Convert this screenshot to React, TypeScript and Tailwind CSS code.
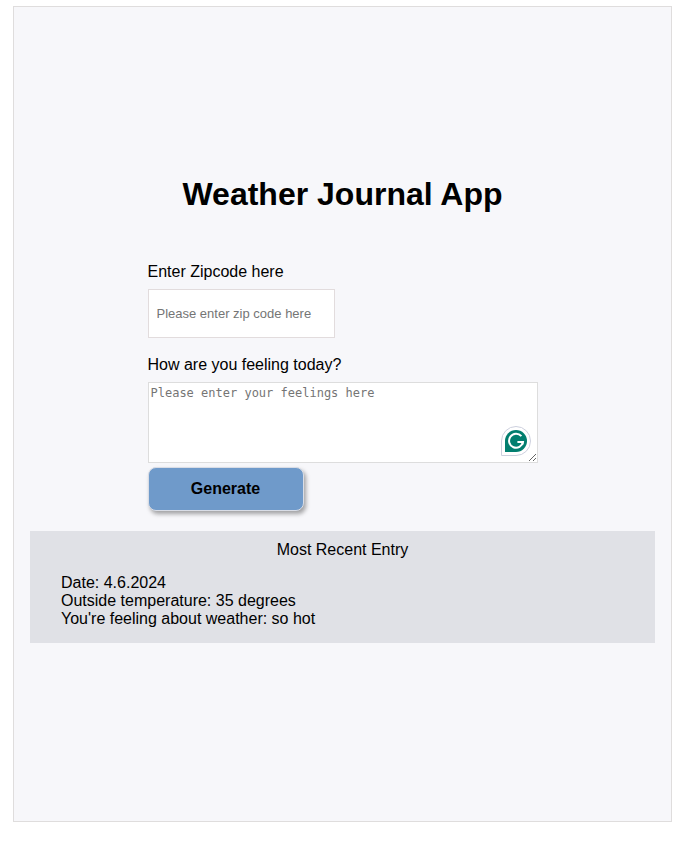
function AssistantBadge() {
  return (
    <svg width="30" height="30" viewBox="0 0 30 30" aria-hidden="true">
      <path d="M15 .5A14.5 14.5 0 0 1 15 29.5H.5V15A14.5 14.5 0 0 1 15 .5Z" fill="#fff" stroke="#cdd0de" />
      <path d="M15 4A11 11 0 0 1 15 26H4V15A11 11 0 0 1 15 4Z" fill="#027e6f" />
      <path d="M20.4 10.2A7 7 0 1 0 22 15.9H16.4" fill="none" stroke="#fff" strokeWidth="2" />
      <path d="M19 15.9H21.6V18.6" fill="none" stroke="#fff" strokeWidth="2" />
    </svg>
  );
}

export default function App() {
  return (
    <div className="min-h-screen bg-white pt-[6px] pr-[15px] pb-[21px] pl-[13px] font-['Liberation_Sans',Arial,sans-serif] text-base leading-[18px] text-black">
      <main className="flex min-h-[calc(100vh-27px)] flex-col items-center justify-center border border-[#dfdddd] bg-[#f7f7fa] px-4">
        <h1 className="text-center text-[32px] leading-10 font-bold">Weather Journal App</h1>

        <form className="mt-[49px] flex w-full max-w-[390px] flex-col items-start" onSubmit={(e) => e.preventDefault()}>
          <label htmlFor="zip">Enter Zipcode here</label>
          <input
            id="zip"
            type="text"
            placeholder="Please enter zip code here"
            className="mt-2 h-[49px] w-[187px] border border-[#e2dcdd] bg-white px-2 text-[13px] outline-none placeholder:text-[#757575]"
          />

          <label htmlFor="feelings" className="mt-[18px]">How are you feeling today?</label>
          <div className="relative mt-2 w-full">
            <textarea
              id="feelings"
              placeholder="Please enter your feelings here"
              className="block h-[81px] w-full resize border border-[#dddddd] bg-white p-[2px] font-['DejaVu_Sans_Mono',monospace] text-[12px] leading-4 outline-none placeholder:text-[#757575]"
            />
            <span className="pointer-events-none absolute right-[7px] bottom-[7px]">
              <AssistantBadge />
            </span>
          </div>

          <button
            type="submit"
            className="mt-1 h-11 w-[156px] rounded-lg border border-[#d9dde6] bg-[#6f9aca] text-base font-bold shadow-[2px_3px_4px_rgba(0,0,0,0.35)]"
          >
            Generate
          </button>
        </form>

        <section className="mt-5 mb-[11px] w-full bg-[#e0e1e6] pt-[10px] pb-[15px]">
          <h2 className="text-center">Most Recent Entry</h2>
          <div className="mt-[15px] px-[31px]">
            <p>Date: 4.6.2024</p>
            <p>Outside temperature: 35 degrees</p>
            <p>You're feeling about weather: so hot</p>
          </div>
        </section>
      </main>
    </div>
  );
}
